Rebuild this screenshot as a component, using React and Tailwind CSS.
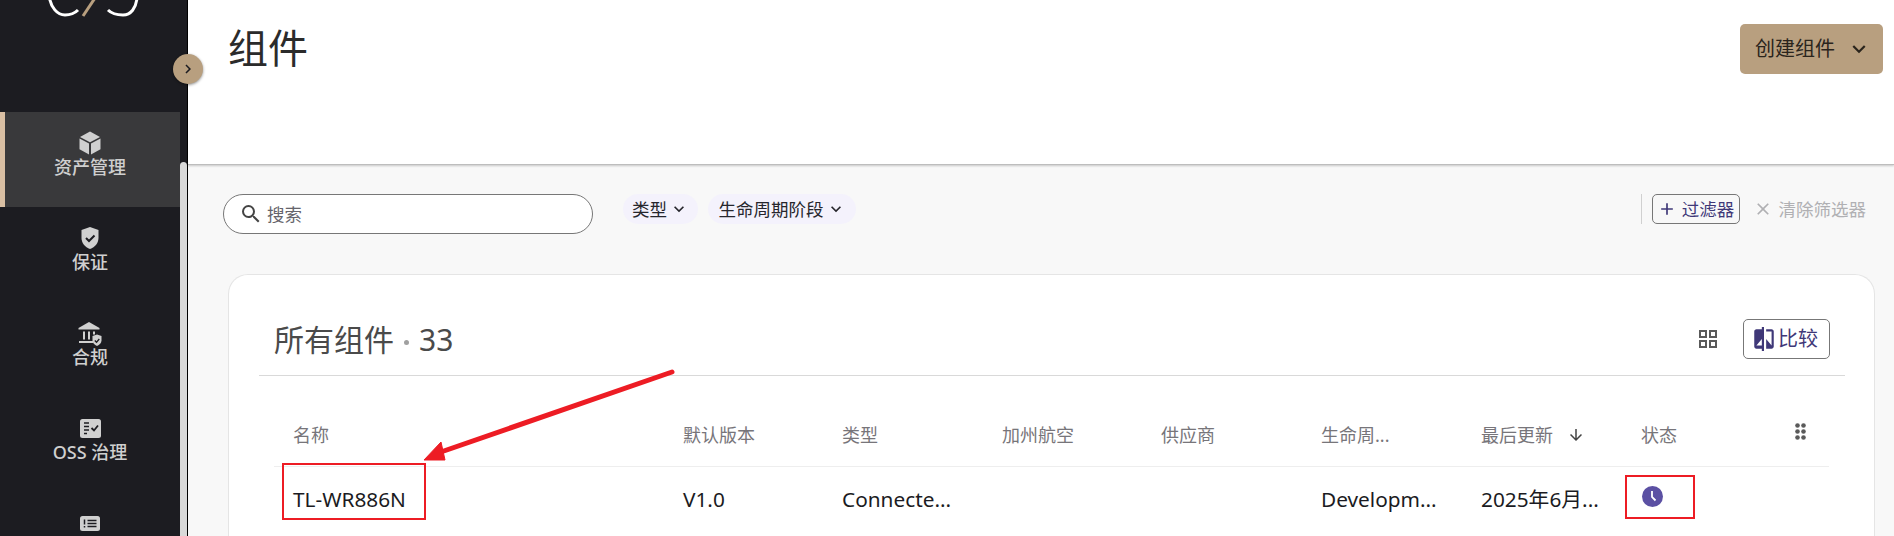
import React from "react";
import { MdOutlineGridView, MdCompare, MdSearch, MdKeyboardArrowDown, MdClose, MdAdd, MdChevronRight, MdArrowDownward } from "react-icons/md";

const font = { fontFamily: '"Noto Sans", "Noto Sans CJK SC", sans-serif' };

const Cube = () => (
  <svg width="22" height="24" viewBox="0 0 22 24" fill="#d0d0d0">
    <path d="M11 0.5 21 6 11 11.2 1 6z" />
    <path d="M0.5 7.5 10 12.6V23.5L0.5 18.2z" />
    <path d="M21.5 7.5 12 12.6V23.5L21.5 18.2z" />
  </svg>
);
const Shield = () => (
  <svg width="18" height="22" viewBox="0 0 18 22">
    <path d="M9 0 17.5 3V11C17.5 16 14 20 9 22 4 20 .5 16 .5 11V3z" fill="#d0d0d0" />
    <path d="M5 11 8 14 13.5 8.5" fill="none" stroke="#1c1c21" strokeWidth="2" />
  </svg>
);
const Bank = () => (
  <svg width="24" height="24" viewBox="0 0 24 24" fill="#d0d0d0" className="mt-[2px]">
    <path d="M11 0 21.500 6V7.500H.5V6z" />
    <rect x="5" y="9.500" width="2" height="8" />
    <rect x="10" y="9.500" width="2" height="8" />
    <rect x="15" y="9.500" width="2" height="3" />
    <rect x="1" y="19" width="14" height="2" />
    <path d="M19 12.500 23.500 14V18.500C23.500 21 21.500 23 19 24 16.500 23 14.500 21 14.500 18.500V14z" />
    <path d="M16.800 18.500 18.500 20.200 21.300 17" fill="none" stroke="#1c1c21" strokeWidth="1.300" />
  </svg>
);
const Checklist = () => (
  <svg width="21" height="19" viewBox="0 0 21 19">
    <rect width="21" height="19" rx="2.500" fill="#d0d0d0" />
    <path d="M4 4H9M4 7.500H9M4 11H9M4 14.500H7" stroke="#1c1c21" strokeWidth="1.600" />
    <path d="M11.500 9 14 11.500 18 6.500" fill="none" stroke="#1c1c21" strokeWidth="1.800" />
  </svg>
);
const ListAlert = () => (
  <svg width="20" height="15" viewBox="0 0 20 15">
    <rect width="20" height="15" rx="2.500" fill="#d0d0d0" />
    <path d="M4.500 3.500V8.500M4.500 10V11.500M7.500 4.500H16.500M7.500 7.500H16.500M7.500 10.500H16.500" stroke="#1c1c21" strokeWidth="1.500" />
  </svg>
);
const Drag = () => (
  <svg width="11" height="17" viewBox="0 0 11 17" fill="#5a5a5a" className="block">
    <circle cx="2.500" cy="2.500" r="2.300" /><circle cx="8.500" cy="2.500" r="2.300" />
    <circle cx="2.500" cy="8.500" r="2.300" /><circle cx="8.500" cy="8.500" r="2.300" />
    <circle cx="2.500" cy="14.500" r="2.300" /><circle cx="8.500" cy="14.500" r="2.300" />
  </svg>
);
const Clock = () => (
  <svg width="21" height="21" viewBox="0 0 21 21" className="block">
    <circle cx="10.500" cy="10.500" r="10.500" fill="#5b50a3" />
    <path d="M10 5V11L13.500 14.500" fill="none" stroke="#fff" strokeWidth="1.800" />
  </svg>
);
const Logo = () => (
  <svg width="92" height="18" viewBox="0 0 92 18" fill="none" className="ml-[48px]">
    <path d="M1.500 -2C3 7 9 15 17 15 23 15 27 13 30 10" stroke="#fff" strokeWidth="3" />
    <path d="M35 16 47 -2" stroke="#b89f7f" strokeWidth="3" />
    <path d="M60 10C64 14 70 15 75 15 83 15 88 8 89 -2" stroke="#fff" strokeWidth="3" />
  </svg>
);

const navItems = [
  { icon: <Cube />, label: "资产管理", active: true },
  { icon: <Shield />, label: "保证" },
  { icon: <Bank />, label: "合规" },
  { icon: <Checklist />, label: "OSS 治理" },
  { icon: <ListAlert />, label: "" },
];

function Sidebar() {
  return (
    <aside className="flex w-[188px] shrink-0 border-r border-black bg-[#1c1c21]">
      <div className="flex w-[180px] shrink-0 flex-col">
        <div className="h-[112px] shrink-0"><Logo /></div>
        {navItems.map((n, i) => (
          <div key={i} className={`flex h-[95px] shrink-0 flex-col items-center pt-[19px] text-[18px] leading-[24px] font-medium text-[#cfcfcf] ${n.active ? "border-l-[5px] border-[#d9bfa3] bg-[#39393b] pr-[5px]" : ""}`}>
            <div className="flex h-[24px] items-center">{n.icon}</div>
            <span>{n.label}</span>
          </div>
        ))}
      </div>
      <div className="mt-[162px] w-[7px] rounded-t-sm bg-[#d9d9d9]" />
    </aside>
  );
}

const columns = ["名称", "默认版本", "类型", "加州航空", "供应商", "生命周...", "最后更新", "状态"];
const cells = ["TL-WR886N", "V1.0", "Connecte...", "", "", "Developm...", "2025年6月...", ""];
const gridCols = "grid grid-cols-[390px_159px_160px_159px_160px_160px_160px_1fr]";

function Table() {
  return (
    <div className="mx-[45px]">
      <div className={`${gridCols} h-[91px] items-end border-b border-[#eeeeee] pb-[19px] pl-[19px] text-[18px] leading-[24px] text-[#77757a]`}>
        {columns.map((c) => (
          <div key={c} className="flex items-center">
            {c}
            {c === "最后更新" && <MdArrowDownward className="ml-[14px] text-[18px] text-[#444]" />}
            {c === "状态" && <span className="ml-[118px] mb-[7px]"><Drag /></span>}
          </div>
        ))}
      </div>
      <div className={`${gridCols} h-[69px] pl-[19px] pt-[18px] text-[20.8px] leading-[28px] text-[#1b1b22]`}>
        {cells.map((c, i) => (
          <div key={i} className="whitespace-nowrap">{i === 7 ? <div className="ml-[1px] mt-[1px]"><Clock /></div> : c}</div>
        ))}
      </div>
    </div>
  );
}

export default function App() {
  return (
    <div className="relative flex h-[536px] w-[1894px] overflow-hidden bg-[#f8f8f8]" style={font}>
      <Sidebar />
      <div className="absolute left-[173px] top-[54px] flex h-[30px] w-[30px] items-center justify-center rounded-full bg-[#b89f7f] text-[#1c1c21] shadow-[0_1px_3px_rgba(0,0,0,.45)]">
        <MdChevronRight className="text-[18px]" />
      </div>

      <main className="flex min-w-0 flex-1 flex-col">
        <header className="flex h-[165px] shrink-0 items-start justify-between border-b border-[#bdbdbd] bg-white pl-[40px] pr-[11px] shadow-[0_1px_2px_rgba(0,0,0,.2)]">
          <h1 className="mt-[20px] text-[40px] leading-[56px] font-normal text-[#2b2b2b]">组件</h1>
          <button className="mt-[24px] flex h-[50px] w-[143px] items-center gap-[11px] rounded-[5px] bg-[#b89f7f] pl-[15px] text-[20px] text-[#2a241c]">
            创建组件
            <MdKeyboardArrowDown className="text-[26px]" />
          </button>
        </header>

        <div className="flex h-[109px] shrink-0 items-start pl-[35px] pr-[28px] pt-[29px]">
          <div className="flex h-[40px] w-[370px] items-center gap-[4px] rounded-full border border-[#777] bg-white pl-[15px] text-[17.500px] text-[#66646b]">
            <MdSearch className="text-[24px] text-[#444]" />
            搜索
          </div>
          <div className="ml-[30px] flex items-center gap-[10px]">
            <div className="flex h-[30px] w-[75px] items-center justify-center gap-[2px] rounded-full bg-[#f4f2fc] text-[17.500px] text-[#26262c]">
              类型<MdKeyboardArrowDown className="text-[20px]" />
            </div>
            <div className="flex h-[30px] w-[148px] items-center justify-center gap-[2px] rounded-full bg-[#f4f2fc] text-[17.500px] text-[#26262c]">
              生命周期阶段<MdKeyboardArrowDown className="text-[20px]" />
            </div>
          </div>
          <div className="ml-auto flex h-[30px] items-center">
            <div className="mr-[10px] h-[30px] w-px bg-[#d0d0d0]" />
            <button className="flex h-[30px] w-[88px] items-center justify-center gap-[5px] rounded-[5px] border border-[#777] text-[17.500px] text-[#3f3878]">
              <MdAdd className="text-[20px]" />过滤器
            </button>
            <span className="ml-[13px] flex items-center gap-[6px] text-[17.500px] text-[#b0b0b3]">
              <MdClose className="text-[20px]" />清除筛选器
            </span>
          </div>
        </div>

        <section className="ml-[40px] mr-[19px] flex-1 rounded-t-[20px] border border-b-0 border-[#e5e5e5] bg-white">
          <div className="ml-[30px] mr-[29px] flex h-[101px] items-start justify-between border-b border-[#d9d9d9] pl-[15px] pr-[15px]">
            <div className="mt-[43px] flex items-center text-[30px] leading-[44px] text-[#4a4a4a]">所有组件<span className="mx-[10px] mt-[4px] h-[5px] w-[5px] rounded-full bg-[#a0a0a0]" />33</div>
            <div className="mt-[44px] flex items-center gap-[23px]">
              <MdOutlineGridView className="text-[24px] text-[#5a5a5a]" />
              <button className="flex h-[40px] w-[87px] items-center gap-[1px] rounded-[5px] border border-[#777] pl-[7px] text-[20px] text-[#3f3878]">
                <MdCompare className="text-[26px]" />比较
              </button>
            </div>
          </div>
          <Table />
        </section>
      </main>

      {/* red annotations */}
      <div className="absolute left-[282px] top-[463px] h-[57px] w-[144px] border-[2px] border-[#ed1c24]" />
      <div className="absolute left-[1625px] top-[475px] h-[44px] w-[70px] border-[2px] border-[#ed1c24]" />
      <svg className="absolute left-0 top-0" width="1894" height="536" fill="none">
        <path d="M672 372 438 453" stroke="#ed1c24" strokeWidth="5" strokeLinecap="round" />
        <path d="M424 460 441 442 445 460z" fill="#ed1c24" stroke="#ed1c24" />
      </svg>
    </div>
  );
}
